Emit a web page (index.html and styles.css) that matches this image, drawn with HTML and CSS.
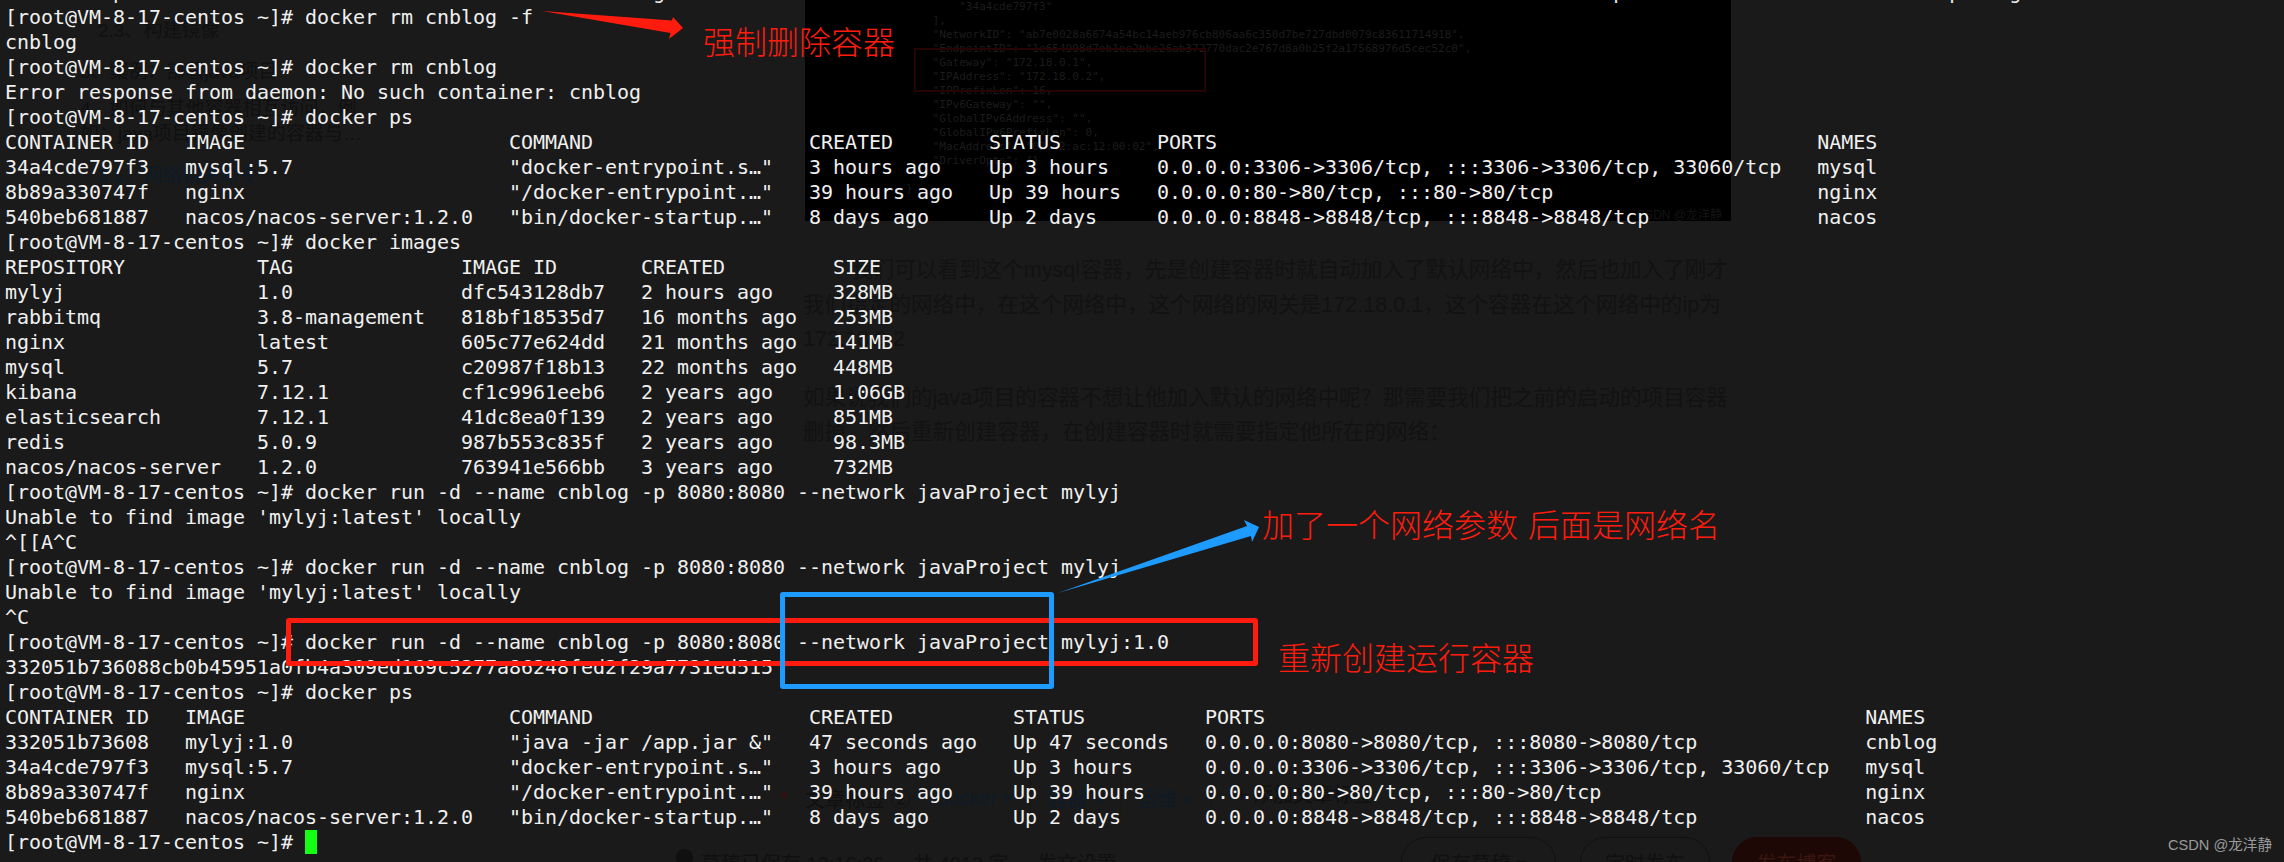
FILE: index.html
```html
<!DOCTYPE html>
<html lang="zh-CN">
<head>
<meta charset="utf-8">
<title>docker network terminal</title>
<link rel="stylesheet" href="styles.css">
</head>
<body>
<main class="stage">
  <nav class="toc">
    <div class="toc-item toc-l2">2.3、构建镜像</div>
    <div class="toc-item toc-gap-a">6、案例：部署java项目</div>
    <div class="toc-item toc-gap-b">4、如何与其他容器相互访问，例<br>如：java项目镜像创建的容器与…</div>
    <div class="toc-item toc-l2 toc-gap-c toc-active">3.1、网络相关命令</div>
  </nav>

  <div class="inset">
<pre class="inset-code">        "34a4cde797f3"
    ],
    "NetworkID": "ab7e0028a6674a54bc14aeb976cb806aa6c350d7be727dbd0079c83611714918",
    "EndpointID": "1e654998d7eb1ee2bbe26ab372770dac2e767d8a0b25f2a17568976d5cec52c0",
    "Gateway": "172.18.0.1",
    "IPAddress": "172.18.0.2",
    "IPPrefixLen": 16,
    "IPv6Gateway": "",
    "GlobalIPv6Address": "",
    "GlobalIPv6PrefixLen": 0,
    "MacAddress": "02:42:ac:12:00:02",
    "DriverOpts": {}
  }
}</pre>
    <div class="inset-box"></div>
    <div class="inset-mark">CSDN @龙洋静</div>
  </div>

  <article class="article">
    <p><span class="indent"></span>我们可以看到这个mysql容器，先是创建容器时就自动加入了默认网络中，然后也加入了刚才<br>我们指定的网络中，在这个网络中，这个网络的网关是172.18.0.1，这个容器在这个网络中的ip为<br>172.18.0.2</p>
    <p>如果说我们的java项目的容器不想让他加入默认的网络中呢？那需要我们把之前的启动的项目容器<br>删掉，然后重新创建容器，在创建容器时就需要指定他所在的网络：</p>
  </article>

  <div class="tags">
    <span class="tags-star">*</span>
    <span class="tags-label">文章标签 ②</span>
    <span class="tag">docker ×</span>
    <span class="tag">容器 ×</span>
    <span class="tag">运维 ×</span>
    <span class="tag-add">+ 添加文章标签</span>
  </div>

  <footer class="publish">
    <span class="status-dot"></span>
    <span class="status-text">草稿已保存 12:16:26</span>
    <span class="status-count">共 4012 字</span>
    <span class="status-set">发文设置 ›</span>
    <span class="btn btn-draft">保存草稿 ▾</span>
    <span class="btn btn-timer">定时发布</span>
    <span class="btn btn-pub">发布博客</span>
  </footer>

<pre class="terminal">         p                                            g                                                                               p                           p    g
[root@VM-8-17-centos ~]# docker rm cnblog -f
cnblog
[root@VM-8-17-centos ~]# docker rm cnblog
Error response from daemon: No such container: cnblog
[root@VM-8-17-centos ~]# docker ps
CONTAINER ID   IMAGE                      COMMAND                  CREATED        STATUS        PORTS                                                  NAMES
34a4cde797f3   mysql:5.7                  "docker-entrypoint.s…"   3 hours ago    Up 3 hours    0.0.0.0:3306-&gt;3306/tcp, :::3306-&gt;3306/tcp, 33060/tcp   mysql
8b89a330747f   nginx                      "/docker-entrypoint.…"   39 hours ago   Up 39 hours   0.0.0.0:80-&gt;80/tcp, :::80-&gt;80/tcp                      nginx
540beb681887   nacos/nacos-server:1.2.0   "bin/docker-startup.…"   8 days ago     Up 2 days     0.0.0.0:8848-&gt;8848/tcp, :::8848-&gt;8848/tcp              nacos
[root@VM-8-17-centos ~]# docker images
REPOSITORY           TAG              IMAGE ID       CREATED         SIZE
mylyj                1.0              dfc543128db7   2 hours ago     328MB
rabbitmq             3.8-management   818bf18535d7   16 months ago   253MB
nginx                latest           605c77e624dd   21 months ago   141MB
mysql                5.7              c20987f18b13   22 months ago   448MB
kibana               7.12.1           cf1c9961eeb6   2 years ago     1.06GB
elasticsearch        7.12.1           41dc8ea0f139   2 years ago     851MB
redis                5.0.9            987b553c835f   2 years ago     98.3MB
nacos/nacos-server   1.2.0            763941e566bb   3 years ago     732MB
[root@VM-8-17-centos ~]# docker run -d --name cnblog -p 8080:8080 --network javaProject mylyj
Unable to find image 'mylyj:latest' locally
^[[A^C
[root@VM-8-17-centos ~]# docker run -d --name cnblog -p 8080:8080 --network javaProject mylyj
Unable to find image 'mylyj:latest' locally
^C
[root@VM-8-17-centos ~]# docker run -d --name cnblog -p 8080:8080 --network javaProject mylyj:1.0
332051b736088cb0b45951a0fb4a309ed169c5277a86248fed2f29a7731ed515
[root@VM-8-17-centos ~]# docker ps
CONTAINER ID   IMAGE                      COMMAND                  CREATED          STATUS          PORTS                                                  NAMES
332051b73608   mylyj:1.0                  "java -jar /app.jar &amp;"   47 seconds ago   Up 47 seconds   0.0.0.0:8080-&gt;8080/tcp, :::8080-&gt;8080/tcp              cnblog
34a4cde797f3   mysql:5.7                  "docker-entrypoint.s…"   3 hours ago      Up 3 hours      0.0.0.0:3306-&gt;3306/tcp, :::3306-&gt;3306/tcp, 33060/tcp   mysql
8b89a330747f   nginx                      "/docker-entrypoint.…"   39 hours ago     Up 39 hours     0.0.0.0:80-&gt;80/tcp, :::80-&gt;80/tcp                      nginx
540beb681887   nacos/nacos-server:1.2.0   "bin/docker-startup.…"   8 days ago       Up 2 days       0.0.0.0:8848-&gt;8848/tcp, :::8848-&gt;8848/tcp              nacos
[root@VM-8-17-centos ~]# <span class="cursor"></span></pre>

  <svg class="arrows" viewBox="0 0 2284 862" aria-hidden="true">
    <polygon class="arrow-red" points="542,11 672,20.5 673,17 683,28 669,39 670.5,33"/>
    <polygon class="arrow-blue" points="1058,593 1247,526 1244,520 1259,527 1252,542 1251,536"/>
  </svg>
  <div class="frame frame-red"></div>
  <div class="frame frame-blue"></div>
  <div class="note note-force">强制删除容器</div>
  <div class="note note-param">加了一个网络参数 后面是网络名</div>
  <div class="note note-rerun">重新创建运行容器</div>
  <div class="watermark">CSDN @龙洋静</div>
</main>
</body>
</html>
```
FILE: styles.css
```css
* { box-sizing: border-box; }
html, body { margin: 0; padding: 0; background: #1a1a1a; }
.stage {
  position: relative;
  width: 2284px;
  height: 862px;
  overflow: hidden;
  background: #1a1a1a;
  font-family: "Liberation Sans", "Noto Sans CJK SC", sans-serif;
}

/* terminal */
.terminal {
  position: relative;
  margin: -20px 0 0;
  padding: 0 0 0 5px;
  font-family: "DejaVu Sans Mono", monospace;
  font-size: 20px;
  letter-spacing: -0.04px;
  line-height: 25px;
  color: #f0f0f0;
  white-space: pre;
}
.cursor {
  display: inline-block;
  width: 12px;
  height: 24px;
  vertical-align: -5px;
  background: #14ff14;
}

/* dim page behind the terminal */
.toc {
  position: absolute;
  left: 80px;
  top: 18px;
  display: flex;
  flex-direction: column;
  font-size: 19px;
  line-height: 25px;
  color: #101010;
  white-space: nowrap;
}
.toc-l2 { padding-left: 18px; }
.toc-gap-a { margin-top: 16px; }
.toc-gap-b { margin-top: 12px; }
.toc-gap-c { margin-top: 17px; }
.toc-active { color: #0e1a28; }

.inset {
  position: absolute;
  left: 805px;
  top: 0;
  width: 926px;
  height: 221px;
  background: #000;
}
.inset-code {
  margin: 0;
  padding: 0 0 0 101px;
  font-family: "DejaVu Sans Mono", monospace;
  font-size: 11.06px;
  line-height: 14px;
  color: #1c1c1c;
}
.inset-box {
  position: absolute;
  left: 109px;
  top: 48px;
  width: 292px;
  height: 44px;
  border: 2px solid #260404;
}
.inset-mark {
  position: absolute;
  right: 9px;
  top: 205px;
  font-size: 12px;
  color: #141414;
}

.article {
  position: absolute;
  left: 803px;
  top: 253px;
  font-size: 21.6px;
  line-height: 34.5px;
  color: #121212;
  white-space: nowrap;
}
.article p { margin: 0 0 24px; }
.indent { display: inline-block; width: 48px; }

.tags {
  position: absolute;
  left: 780px;
  top: 777px;
  height: 42px;
  display: flex;
  align-items: center;
  font-size: 20px;
  color: #101010;
  white-space: nowrap;
}
.tags-star { width: 25px; color: #3a0d0d; }
.tags-label { width: 116px; }
.tag {
  display: flex;
  align-items: center;
  height: 42px;
  padding: 0 16px;
  border-right: 1px solid #161616;
  color: #0e1a28;
}
.tag-add { margin-left: 24px; margin-top: -10px; }

.publish {
  position: absolute;
  left: 676px;
  top: 837px;
  width: 1190px;
  height: 60px;
  font-size: 20px;
  color: #101010;
  white-space: nowrap;
}
.publish > span { position: absolute; }
.status-dot { left: 0; top: 12px; width: 17px; height: 17px; border-radius: 50%; background: #101010; }
.status-text { left: 25px; top: 11px; }
.status-count { left: 237px; top: 11px; }
.status-set { left: 361px; top: 11px; }
.btn {
  top: 0;
  height: 50px;
  border: 1px solid #111;
  border-radius: 25px;
  display: flex;
  align-items: center;
  justify-content: center;
}
.btn-draft { left: 725px; width: 155px; }
.btn-timer { left: 904px; width: 130px; }
.btn-pub { left: 1056px; width: 129px; background: #1e0805; border-color: #1e0805; color: #3a1610; }

/* annotations */
.arrows {
  position: absolute;
  left: 0;
  top: 0;
  width: 2284px;
  height: 862px;
}
.arrow-red { fill: #ff1c0e; }
.arrow-blue { fill: #1e9bff; }
.frame { position: absolute; border-radius: 3px; }
.frame-red { left: 286px; top: 618px; width: 972px; height: 48px; border: 5px solid #ff1c0e; }
.frame-blue { left: 780px; top: 592px; width: 274px; height: 97px; border: 5px solid #1e9bff; }
.note {
  position: absolute;
  font-family: "Noto Sans CJK SC", sans-serif;
  font-size: 32px;
  font-weight: 300;
  line-height: 40px;
  color: #ff1c0e;
  white-space: nowrap;
}
.note-force { left: 703px; top: 20px; }
.note-param { left: 1262px; top: 503px; word-spacing: 3px; }
.note-rerun { left: 1278px; top: 636px; }
.watermark {
  position: absolute;
  left: 2168px;
  top: 835px;
  font-family: "Liberation Sans", "Noto Sans CJK SC", sans-serif;
  font-size: 14.6px;
  line-height: 20px;
  color: #9a9a9a;
  white-space: nowrap;
}
```
